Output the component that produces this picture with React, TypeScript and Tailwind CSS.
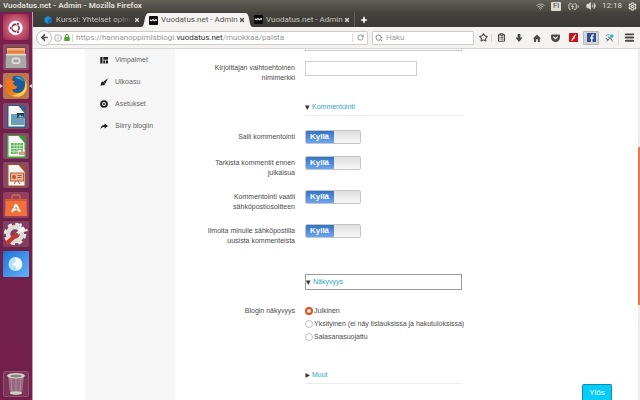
import React from "react";
import {
  ArrowLeft,
  BatteryCharging,
  ClipboardList,
  Info,
  Menu,
  Plus,
  RotateCw,
  Search,
  Settings,
  Star,
  Volume2,
  Wifi,
  X,
} from "lucide-react";

const UI_FONT = "font-['Roboto','Noto_Sans',sans-serif]";
const PAGE_FONT = "font-['Liberation_Sans',Arial,sans-serif]";

/* ---------- Top panel ---------- */

function TopPanel() {
  return (
    <header className="flex h-3 shrink-0 items-center justify-between bg-linear-to-b from-[#625f57] to-[#48463f] pr-[3px] pl-[3px] text-[#dfdbd2]">
      <h1 className="text-[8px] leading-3 font-bold">Vuodatus.net - Admin - Mozilla Firefox</h1>
      <div className="flex items-center gap-[6px]">
        <Wifi className="size-[9px] text-[#b9b5aa]" strokeWidth={2.5} />
        <span className="flex h-[9px] w-[10px] items-center justify-center rounded-[1px] bg-[#dfdbd2] text-[8px] leading-none text-[#4a4841]">
          Fi
        </span>
        <BatteryCharging className="h-[11px] w-[13px]" strokeWidth={2} />
        <Volume2 className="size-[10px]" strokeWidth={2} fill="currentColor" />
        <time className="text-[8px] leading-3">12:18</time>
        <Settings className="size-[9px]" strokeWidth={3} />
      </div>
    </header>
  );
}

/* ---------- Launcher ---------- */

function UbuntuIcon() {
  return (
    <svg viewBox="0 0 26 26" className="size-full">
      <defs>
        <radialGradient id="dash" cx="50%" cy="50%" r="65%">
          <stop offset="0" stopColor="#d9909f" />
          <stop offset="0.6" stopColor="#c0506c" />
          <stop offset="1" stopColor="#9c2b50" />
        </radialGradient>
      </defs>
      <rect width="26" height="26" rx="2" fill="url(#dash)" />
      <circle cx="12.500" cy="14" r="7.200" fill="#fff" />
      <circle cx="12.500" cy="14" r="3.600" fill="none" stroke="#8b2a4d" strokeWidth="1.600" />
      <g fill="#8b2a4d" stroke="#fff" strokeWidth="0.700">
        <circle cx="7.800" cy="14" r="1.500" />
        <circle cx="14.900" cy="9.900" r="1.500" />
        <circle cx="14.900" cy="18.100" r="1.500" />
      </g>
    </svg>
  );
}

function FilesIcon() {
  return (
    <svg viewBox="0 0 26 26" className="size-full">
      <rect width="26" height="26" rx="2" fill="#8d4a68" />
      <path d="M4 3h18l1 5H3z" fill="#6b4a3d" />
      <rect x="4" y="4" width="18" height="7" fill="#f0b184" />
      <rect x="4.500" y="6.500" width="17" height="3" fill="#e8803f" />
      <path d="M3 10h20l.5 13a1 1 0 0 1-1 1h-19a1 1 0 0 1-1-1z" fill="#aaa8a6" />
      <path d="M3 10h20v1.500H3z" fill="#d9d7d4" />
      <rect x="9" y="14" width="8" height="5.500" rx="2" fill="#c9c7c4" stroke="#e9e7e4" />
      <path d="M11 17h4" stroke="#77757a" />
    </svg>
  );
}

function FirefoxIcon() {
  return (
    <svg viewBox="0 0 26 26" className="size-full">
      <defs>
        <linearGradient id="fox" x1="0" y1="0" x2="1" y2="0.600">
          <stop offset="0" stopColor="#e5661d" />
          <stop offset="0.700" stopColor="#ee8420" />
          <stop offset="1" stopColor="#fbd449" />
        </linearGradient>
      </defs>
      <rect width="26" height="26" rx="2" fill="#b9764f" />
      <circle cx="13" cy="13.500" r="10.800" fill="url(#fox)" />
      <path d="M10 3.500C16 1 22 5 22.500 11c.4 5-3 9-8 9-3 0-5-1.500-5.500-4l3-.5 2-2-3-1-1-2.500 2-1.500-3-1z" fill="#1d5a9c" />
      <path d="M12 4c4-1.200 8 1 9 5-2-2-3-1-4-3-2 1-3-1-5-2z" fill="#3aa0dc" />
      <path d="M22 7c2.500 5 1.500 12-5 15.500-4 1.500-6 .5-8-.5 6 0 11-2.500 12.500-7 .8-3 .8-5 .5-8z" fill="#fbd04a" />
      <path d="M3 9l2-4 2 2.500 4 .5-1.500 2.500 3 2.500 2 .5-2 2.500-3.500.5-2-1z" fill="#ef7a22" />
    </svg>
  );
}

function DocumentIcon({ color, children }: { color: string; children: React.ReactNode }) {
  return (
    <svg viewBox="0 0 26 26" className="size-full">
      <rect width="26" height="26" rx="2" fill="#85486a" />
      <path d="M4 2h12l7 7v16H4z" fill={color} />
      <path d="M5.500 3h10l6 7v13.500h-16z" fill="#f7f6f4" />
      <path d="M15.500 2.500H23V10z" fill={color} opacity="0.750" />
      {children}
    </svg>
  );
}

function WriterIcon() {
  return (
    <DocumentIcon color="#2a628c">
      <path d="M8 11h6v5h7v6H8z" fill="#6d9dbd" />
      <rect x="14" y="10" width="7.500" height="5.500" fill="#223f52" />
      <path d="M15 14.500l2-3 1.500 2 1-1 1.500 2z" fill="#82c0d4" />
    </DocumentIcon>
  );
}

function CalcIcon() {
  return (
    <DocumentIcon color="#39a338">
      <rect x="8" y="10" width="12" height="11" fill="#5cb85a" />
      <path d="M8 12.700h12M8 15.500h12M8 18.200h12M11 10v11M14 10v11M17 10v11" stroke="#e2f3e0" strokeWidth="0.700" />
      <rect x="15.500" y="17" width="6" height="5" fill="#fff" />
      <path d="M17 22v-3M19 22v-5M21 22v-3.500" stroke="#d3563c" strokeWidth="1.200" />
    </DocumentIcon>
  );
}

function ImpressIcon() {
  return (
    <DocumentIcon color="#a3502c">
      <rect x="7.500" y="11" width="13" height="8" fill="#e9b495" stroke="#b8613d" />
      <circle cx="11" cy="15" r="2" fill="#c4532f" />
      <path d="M14.500 13.500h4M14.500 15.500h4M11 22l2-3M17 22l-2-3" stroke="#a3502c" strokeWidth="0.900" />
    </DocumentIcon>
  );
}

function SoftwareIcon() {
  return (
    <svg viewBox="0 0 26 26" className="size-full">
      <rect width="26" height="26" rx="2" fill="#94405d" />
      <path d="M9 8V5a2 2 0 0 1 2-2h4a2 2 0 0 1 2 2v3" fill="none" stroke="#d2694d" strokeWidth="1.500" />
      <path d="M2.500 7h21l.5 17H2z" fill="#ef7039" />
      <path d="M2.500 7h21v2h-21z" fill="#d55d31" />
      <path d="M9 20l4-8 4 8M9.500 17.500h7" fill="none" stroke="#fff" strokeWidth="1.900" strokeDasharray="4 0.800" />
    </svg>
  );
}

function SettingsTileIcon() {
  return (
    <svg viewBox="0 0 26 26" className="size-full">
      <rect width="26" height="26" rx="2" fill="#7f3f61" />
      <circle cx="12" cy="13" r="9.500" fill="none" stroke="#e8e6e3" strokeWidth="3.500" strokeDasharray="4.200 3.260" />
      <circle cx="12" cy="13" r="7" fill="none" stroke="#dedcd8" strokeWidth="4.500" />
      <path d="M13 14l7-7" stroke="#f4f3f1" strokeWidth="3" />
      <path d="M18 2.500l-1 4.500 3 3 4.500-1" fill="none" stroke="#f4f3f1" strokeWidth="2" />
      <path d="M4.500 21.500L13.500 14" stroke="#c93631" strokeWidth="4.200" strokeLinecap="round" />
    </svg>
  );
}

function GlobeTileIcon() {
  return (
    <svg viewBox="0 0 26 26" className="size-full">
      <defs>
        <linearGradient id="globe" x1="0" y1="0" x2="1" y2="1">
          <stop offset="0" stopColor="#1f70d8" />
          <stop offset="1" stopColor="#62b3fa" />
        </linearGradient>
      </defs>
      <rect width="26" height="26" rx="1" fill="url(#globe)" />
      <circle cx="12.500" cy="13" r="7" fill="#b5e3fb" />
      <path d="M12 6.500c4 0 7 3 7 6.500s-2.500 6-5 6.500l-1-4-4-2 4-3z" fill="#f3fbff" />
    </svg>
  );
}

function TrashIcon() {
  return (
    <svg viewBox="0 0 26 26" className="size-full">
      <rect x="0.500" y="0.500" width="25" height="25" rx="2" fill="#7b3458" stroke="#8f5473" />
      <path d="M5 5h16l-2 18H7z" fill="#986a82" />
      <path d="M8 7l1 15M13 7v15M18 7l-1 15" stroke="#b391a3" strokeWidth="0.800" />
      <ellipse cx="13" cy="22" rx="6" ry="1.800" fill="#cfcdc8" />
      <ellipse cx="13" cy="4.800" rx="9" ry="2.800" fill="#d5d4cf" />
      <ellipse cx="13" cy="5" rx="6" ry="1.400" fill="#87827f" />
    </svg>
  );
}

function LauncherTile({ name, active, children }: { name: string; active?: boolean; children: React.ReactNode }) {
  return (
    <li className="flex w-full items-center justify-between">
      <span className={active ? "border-y-2 border-l-[3px] border-y-transparent border-l-[#e3d3da]" : "w-[3px]"} />
      <button type="button" aria-label={name} className="block size-[26px] shrink-0">
        {children}
      </button>
      <span className={active ? "border-y-2 border-r-[3px] border-y-transparent border-r-[#e3d3da]" : "w-[3px]"} />
    </li>
  );
}

function Launcher() {
  return (
    <nav
      aria-label="Launcher"
      className="flex w-[33px] shrink-0 flex-col justify-between border-r border-[#c39fb2] bg-linear-to-b from-[#7d1f4e] via-[#6c2148] to-[#751e4a] pt-[2px] pb-[3px]"
    >
      <ul className="flex h-[263px] flex-col justify-between">
        <LauncherTile name="Ubuntu"><UbuntuIcon /></LauncherTile>
        <LauncherTile name="Files"><FilesIcon /></LauncherTile>
        <LauncherTile name="Firefox" active><FirefoxIcon /></LauncherTile>
        <LauncherTile name="Writer"><WriterIcon /></LauncherTile>
        <LauncherTile name="Calc"><CalcIcon /></LauncherTile>
        <LauncherTile name="Impress"><ImpressIcon /></LauncherTile>
        <LauncherTile name="Software"><SoftwareIcon /></LauncherTile>
        <LauncherTile name="Settings"><SettingsTileIcon /></LauncherTile>
        <LauncherTile name="Globe"><GlobeTileIcon /></LauncherTile>
      </ul>
      <ul>
        <LauncherTile name="Trash"><TrashIcon /></LauncherTile>
      </ul>
    </nav>
  );
}

/* ---------- Browser chrome ---------- */

function VuodatusFavicon() {
  return (
    <svg viewBox="0 0 9 9" className="size-[9px] shrink-0">
      <rect width="9" height="9" rx="1" fill="#0c0c0c" />
      <path d="M1 3.800l1.200 1L4 3.600l1.200 1.200L7 3.700l1 .8" fill="none" stroke="#f5f5f5" strokeWidth="1.200" />
    </svg>
  );
}

function CloseTab({ dark }: { dark?: boolean }) {
  return (
    <button type="button" aria-label="Close tab" className={dark ? "text-[#4c4c4c]" : "text-[#dcdad5]"}>
      <X className="size-[6px]" strokeWidth={5} />
    </button>
  );
}

function TabStrip() {
  return (
    <div className="flex h-[15px] shrink-0 items-stretch bg-linear-to-b from-[#44423c] to-[#3a3935] text-[8px] leading-3 text-[#c9c6bf]">
      <div className="flex w-[108px] items-center justify-between pr-[1px] pl-[11px]">
        <span className="flex items-center gap-1">
          <svg viewBox="0 0 8 8" className="size-2 shrink-0">
            <path d="M4 0l3.500 2v4L4 8 .5 6V2z" fill="#1c8ed6" />
            <path d="M4 4l3.500-2v4L4 8z" fill="#0f6cb0" />
          </svg>
          <span className="whitespace-nowrap [mask-image:linear-gradient(to_right,black_75%,transparent)]">
            Kurssi: Yhteiset opinn
          </span>
        </span>
        <CloseTab />
      </div>
      <div className="flex w-[112px] items-stretch text-[#55534f]">
        <svg viewBox="0 0 8 15" className="h-[15px] w-2 shrink-0">
          <path d="M0 15C5 15 2 1 8 1v14z" fill="#f4f3f2" />
        </svg>
        <div className="mt-px flex flex-1 items-center justify-between bg-[#f4f3f2]">
          <span className="flex items-center gap-[3px]">
            <VuodatusFavicon />
            <span className="whitespace-nowrap">Vuodatus.net - Admin</span>
          </span>
          <CloseTab dark />
        </div>
        <svg viewBox="0 0 8 15" className="h-[15px] w-2 shrink-0">
          <path d="M8 15C3 15 6 1 0 1v14z" fill="#f4f3f2" />
        </svg>
      </div>
      <div className="flex w-[102px] items-center justify-between border-r border-[#63615b] pr-1 pl-px">
        <span className="flex items-center gap-[3px]">
          <VuodatusFavicon />
          <span className="whitespace-nowrap">Vuodatus.net - Admin</span>
        </span>
        <CloseTab />
      </div>
      <button type="button" aria-label="New tab" className="flex w-[18px] items-center justify-center text-white">
        <Plus className="size-2" strokeWidth={5} />
      </button>
    </div>
  );
}

function ToolButton({ name, pressed, children }: { name: string; pressed?: boolean; children: React.ReactNode }) {
  return (
    <button
      type="button"
      aria-label={name}
      className={
        pressed
          ? "mx-px flex h-[14px] w-4 items-center justify-center rounded-[1px] border border-[#b9b7b4] bg-[#d5d4d2]"
          : "flex h-[14px] w-[18px] items-center justify-center"
      }
    >
      {children}
    </button>
  );
}

function Toolbar() {
  return (
    <div className="flex h-[22px] shrink-0 items-center border-b border-[#d8d6d4] bg-[#f4f3f2] pl-[3px] text-[#4a4a4a]">
      <button
        type="button"
        aria-label="Back"
        className="z-10 flex size-4 shrink-0 items-center justify-center rounded-full border border-[#c6c4c1] bg-[#fafafa]"
      >
        <ArrowLeft className="size-[9px]" strokeWidth={4} />
      </button>
      <div className="-ml-2 flex h-[14px] min-w-0 flex-1 items-center rounded-[1px] border border-[#cfcdca] bg-white pl-[9px]">
        <Info className="size-2 shrink-0 text-[#8a8a8a]" strokeWidth={2} />
        <svg viewBox="0 0 6 7" className="mx-[2px] h-[7px] w-[6px] shrink-0">
          <path d="M1.500 3.500V2a1.500 1.500 0 0 1 3 0v1.500" fill="none" stroke="#4fa02c" />
          <rect x="0.300" y="3" width="5.400" height="4" rx="0.500" fill="#4fa02c" />
        </svg>
        <span className="mr-[3px] h-2 border-l border-[#d9d9d9]" />
        <a href="#palsta" className="flex-1 truncate text-[8px] leading-3 text-[#969696]">
          https://hannanoppimisblogi.<span className="text-[#2e2e2e]">vuodatus.net</span>/muokkaa/palsta
        </a>
        <button
          type="button"
          aria-label="Reload"
          className="flex h-2 w-[15px] items-center justify-center border-l border-[#dcdcdc] text-[#7d8894]"
        >
          <RotateCw className="size-[7px]" strokeWidth={3} />
        </button>
      </div>
      <label className="ml-1 flex h-[14px] w-[102px] items-center gap-[3px] rounded-[1px] border border-[#cfcdca] bg-white pl-[2px]">
        <Search className="size-2 shrink-0 text-[#8a8a8a]" strokeWidth={3} />
        <input
          type="search"
          aria-label="Haku"
          placeholder="Haku"
          className="w-full min-w-0 text-[8px] leading-3 outline-none placeholder:text-[#9b9b9b]"
        />
      </label>
      <div className="flex items-center">
        <button
          type="button"
          aria-label="Bookmark"
          className="flex h-2 w-[18px] items-center justify-end border-r border-[#dad8d6] pr-[3px]"
        >
          <Star className="size-[9px]" strokeWidth={3} />
        </button>
        <ToolButton name="Library"><ClipboardList className="size-[9px]" strokeWidth={3} /></ToolButton>
        <ToolButton name="Downloads">
          <svg viewBox="0 0 9 9" className="size-2">
            <path d="M3 0h3v4h2.500l-4 5-4-5H3z" fill="#4a4a4a" />
          </svg>
        </ToolButton>
        <ToolButton name="Home">
          <svg viewBox="0 0 9 9" className="size-2">
            <path d="M4.500.5L9 5H7.700v4H5.500V6h-2v3H1.300V5H0z" fill="#4a4a4a" />
          </svg>
        </ToolButton>
        <ToolButton name="Pocket">
          <svg viewBox="0 0 10 9" className="h-2 w-[9px]">
            <path d="M1 .5h8a1 1 0 0 1 1 1V4a5 5 0 0 1-10 0V1.500a1 1 0 0 1 1-1z" fill="#4a4a4a" />
            <path d="M2.500 3L5 5.300 7.500 3" fill="none" stroke="#fff" strokeWidth="1.300" />
          </svg>
        </ToolButton>
        <ToolButton name="Flash">
          <svg viewBox="0 0 9 9" className="size-[9px]">
            <rect width="9" height="9" rx="0.500" fill="#c9141b" />
            <path d="M2.500 7.500C4 7 4 5 4.700 4S6 2 7 1.800M4 5h2" fill="none" stroke="#fff" strokeWidth="1.100" />
          </svg>
        </ToolButton>
        <ToolButton name="Facebook" pressed>
          <svg viewBox="0 0 9 9" className="size-[9px] shrink-0">
            <rect width="9" height="9" fill="#2f4f96" />
            <path d="M6.800 2H6c-.8 0-1.200.4-1.200 1.200V9M3.300 5h3.200" fill="none" stroke="#fff" strokeWidth="1.300" />
          </svg>
        </ToolButton>
        <ToolButton name="Screenshot">
          <svg viewBox="0 0 10 9" className="h-2 w-[9px]">
            <path d="M1 2.500a2 2 0 0 1 2-1.500h2M1 4.500a3 2 0 0 0 3 2M2 8.500l4-5 2.500 5M3.500 3.500l4 3" fill="none" stroke="#777" strokeWidth="1.100" />
            <circle cx="7.600" cy="2.200" r="2" fill="#17c3d2" />
          </svg>
        </ToolButton>
        <span className="h-[14px] border-l border-[#dddbd9]" />
        <button type="button" aria-label="Menu" className="flex w-[21px] items-center justify-center">
          <Menu className="size-[11px]" strokeWidth={4} />
        </button>
      </div>
    </div>
  );
}

/* ---------- Page ---------- */

function SidebarLink({ label, children }: { label: string; children: React.ReactNode }) {
  return (
    <li>
      <a href={"#" + label} className="flex h-[22px] items-center gap-[7px] pl-[15px]">
        <svg viewBox="0 0 8 8" className="size-2 shrink-0 text-[#1c1c1c]">
          {children}
        </svg>
        {label}
      </a>
    </li>
  );
}

function Sidebar() {
  return (
    <aside className="w-[90px] shrink-0 bg-[#f6f6f6] text-[7px] text-[#666]">
      <ul>
        <SidebarLink label="Vimpaimet">
          <path d="M.3 1h2.200v6.500H.3zM3.300 1H8v2.700H3.300zM3.300 4.600h2v2.900h-2zM6 4.600h2v2.900H6z" fill="currentColor" />
        </SidebarLink>
        <SidebarLink label="Ulkoasu">
          <path d="M8 .2L5.400 5.400 3.600 3.600zM3 3.400L5.200 5.600C5 7 3.500 7.800.3 7.500 1.300 6.500.3 4 3 3.400z" fill="currentColor" />
        </SidebarLink>
        <SidebarLink label="Asetukset">
          <circle cx="4" cy="4" r="2.900" fill="none" stroke="currentColor" strokeWidth="1.900" />
          <circle cx="4" cy="4" r="1" fill="currentColor" />
        </SidebarLink>
        <SidebarLink label="Siirry blogiin">
          <path d="M4.600 1.500L8 4 4.600 6.500V5C2.800 5 1.500 5.500.5 7c0-2.300 1.500-3.900 4.100-4z" fill="currentColor" />
        </SidebarLink>
      </ul>
    </aside>
  );
}

const ROW = "grid grid-cols-[120px_1fr] items-start gap-x-[10px]";
const ROW_LABEL = "pt-[2px] pl-5 text-right leading-[10px]";

function Heading({ title, open, focused }: { title: string; open?: boolean; focused?: boolean }) {
  return (
    <summary
      className={
        focused
          ? "ml-[130px] flex h-4 w-[157px] list-none items-center border border-[#9a9a9a] text-[#2fa5bf]"
          : "ml-[130px] flex h-[17px] w-[157px] list-none items-center border-b border-[#ececec] text-[#2fa5bf]"
      }
    >
      <svg viewBox="0 0 5 5" className="mr-[2px] size-[5px]">
        <path d={open ? "M0 .5h4.600L2.300 5z" : "M.5 0v4.800L5 2.400z"} fill="#333" />
      </svg>
      {title}
    </summary>
  );
}

function Toggle({ id, label }: { id: string; label: string }) {
  return (
    <div className={ROW}>
      <label htmlFor={id} className={ROW_LABEL}>
        {label}
      </label>
      <label
        htmlFor={id}
        className="flex h-[14px] w-14 overflow-hidden rounded-[2px] border border-[#c4c4c4] bg-linear-to-b from-[#dedede] to-[#f8f8f8]"
      >
        <input id={id} type="checkbox" role="switch" defaultChecked className="sr-only" />
        <span className="-my-px -ml-px flex w-[29px] items-center justify-center bg-linear-to-b from-[#2f6fc0] to-[#6fa8f5] text-[8px] leading-none font-bold text-white">
          Kyllä
        </span>
      </label>
    </div>
  );
}

function Radio({ label, checked }: { label: string; checked?: boolean }) {
  return (
    <label className="flex h-[13px] items-center gap-px whitespace-nowrap">
      <input
        type="radio"
        name="visibility"
        defaultChecked={checked}
        className="size-2 shrink-0 appearance-none rounded-full border border-[#bdbdbd] bg-white checked:border-2 checked:border-[#dd4f22] checked:bg-[#fbe9e2]"
      />
      {label}
    </label>
  );
}

function BlogForm() {
  return (
    <form className="min-w-0 flex-1 text-[7px] leading-[10px] text-[#4a4a4a]">
      <div className="ml-[130px] flex h-[2px] items-end overflow-hidden">
        <input aria-label="Kuvaus" className="h-[15px] w-[157px] shrink-0 border border-[#c8c8c8]" />
      </div>
      <div className={ROW + " mt-[10px]"}>
        <label htmlFor="alias" className={ROW_LABEL}>
          Kirjoittajan vaihtoehtoinen nimimerkki
        </label>
        <input id="alias" type="text" className="h-[15px] w-28 border border-[#cfcfcf] bg-white px-1 outline-none" />
      </div>

      <details open className="mt-4">
        <Heading title="Kommentointi" open />
        <div className="mt-[14px] flex flex-col gap-3">
          <Toggle id="allow" label="Salli kommentointi" />
          <Toggle id="review" label="Tarkista kommentit ennen julkaisua" />
          <Toggle id="email" label="Kommentointi vaatii sähköpostiosoitteen" />
          <Toggle id="notify" label="Ilmoita minulle sähköpostilla uusista kommenteista" />
        </div>
      </details>

      <details open className="mt-7">
        <Heading title="Näkyvyys" open focused />
        <div role="radiogroup" aria-labelledby="visibility" className={ROW + " mt-[14px]"}>
          <span id="visibility" className={ROW_LABEL}>
            Blogin näkyvyys
          </span>
          <div>
            <Radio label="Julkinen" checked />
            <Radio label="Yksityinen (ei näy listauksissa ja hakutuloksissa)" />
            <Radio label="Salasanasuojattu" />
          </div>
        </div>
      </details>

      <details className="mt-6">
        <Heading title="Muut" />
      </details>
    </form>
  );
}

export default function App() {
  return (
    <div className={"flex h-screen flex-col overflow-hidden bg-white " + UI_FONT}>
      <TopPanel />
      <div className="flex min-h-0 flex-1">
        <Launcher />
        <div className="flex min-w-0 flex-1 flex-col">
          <TabStrip />
          <Toolbar />
          <main className={"relative flex min-h-0 flex-1 overflow-hidden bg-white pl-[52px] " + PAGE_FONT}>
            <Sidebar />
            <BlogForm />
            <div className="flex w-[2px] shrink-0 flex-col bg-[#eeedeb]">
              <div className="mt-[98px] h-[158px] bg-[#f0764a]" />
            </div>
            <button
              type="button"
              className="absolute right-7 bottom-0 h-4 w-[30px] rounded-t-[2px] border border-b-0 border-[#0a8fb0] bg-[#06ccf8] text-[8px] leading-none text-white"
            >
              Ylös
            </button>
          </main>
        </div>
      </div>
    </div>
  );
}
